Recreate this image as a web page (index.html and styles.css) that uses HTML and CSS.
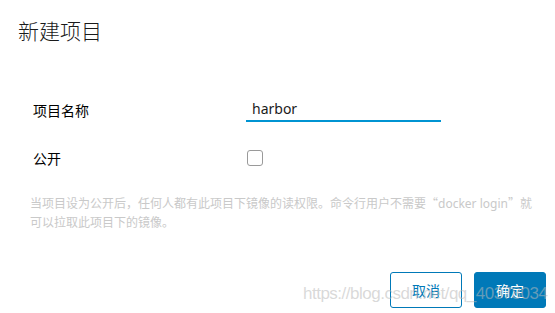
FILE: index.html
```html
<!DOCTYPE html>
<html lang="zh-CN">
<head>
<meta charset="utf-8">
<title>新建项目</title>
<link rel="stylesheet" href="styles.css">
</head>
<body>
<div class="dialog">
  <h1 class="title">新建项目</h1>
  <form class="form">
    <div class="row">
      <label class="label" for="name">项目名称</label>
      <div class="field"><input id="name" class="input" type="text" value="harbor"></div>
    </div>
    <div class="row row-public">
      <label class="label" for="pub">公开</label>
      <div class="field"><span class="checkbox" id="pub"></span></div>
    </div>
  </form>
  <p class="help">当项目设为公开后，任何人都有此项目下镜像的读权限。命令行用户不需要<span class="cjk">“</span>docker login<span class="cjk">”</span>就<br>可以拉取此项目下的镜像。</p>
  <div class="footer">
    <button class="btn btn-outline" type="button">取消</button>
    <button class="btn btn-primary" type="button">确定</button>
  </div>
</div>
<div class="watermark">https://blog.csdn.net/qq_40378034</div>
</body>
</html>
```
FILE: styles.css
```css
html, body {
  margin: 0;
  padding: 0;
  background: #ffffff;
}
body {
  position: relative;
  width: 555px;
  height: 313px;
  overflow: hidden;
  font-family: "Noto Sans", "Noto Sans CJK SC", sans-serif;
  color: #222;
}
.dialog {
  padding: 18px 9px 0 18px;
}
.title {
  margin: 0;
  font-family: "Noto Sans CJK SC", sans-serif;
  font-size: 21px;
  line-height: 25px;
  font-weight: 300;
  color: #1a1a1a;
}
.form {
  margin: 55px 0 0 0;
  padding-left: 15px;
}
.row {
  display: grid;
  grid-template-columns: 213px 195px;
  align-items: center;
  height: 24px;
}
.row-public {
  margin-top: 24px;
}
.label {
  font-family: "Noto Sans CJK SC", sans-serif;
  font-size: 14px;
  font-weight: 400;
  color: #000;
  line-height: 24px;
}
.field {
  display: flex;
  align-items: center;
  height: 24px;
}
.input {
  box-sizing: border-box;
  width: 195px;
  height: 24px;
  margin: 0;
  padding: 0 0 1px 6px;
  border: none;
  border-bottom: 2px solid #0094d2;
  outline: none;
  font-family: "Noto Sans", sans-serif;
  font-size: 14px;
  color: #1a1a1a;
  background: transparent;
}
.checkbox {
  box-sizing: border-box;
  display: block;
  width: 16px;
  height: 16px;
  margin-left: 1px;
  border: 1px solid #9a9a9a;
  border-radius: 3px;
  background: #fff;
}
.help {
  margin: 23px 0 0 12px;
  font-family: "Noto Sans", "Noto Sans CJK SC", sans-serif;
  font-size: 12px;
  line-height: 19px;
  color: #c9c9c9;
}
.cjk {
  font-family: "Noto Sans CJK SC", sans-serif;
}
.footer {
  display: flex;
  justify-content: flex-end;
  gap: 12px;
  margin-top: 40px;
}
.btn {
  box-sizing: border-box;
  width: 72px;
  height: 36px;
  margin: 0;
  padding: 0;
  border: 1px solid #0079b8;
  border-radius: 3px;
  font-family: "Noto Sans CJK SC", sans-serif;
  font-size: 14px;
  cursor: pointer;
}
.btn-outline {
  background: #fff;
  color: #0079b8;
}
.btn-primary {
  background: #0079b8;
  color: #fff;
}
.watermark {
  position: absolute;
  left: 303px;
  top: 284px;
  font-family: "Liberation Sans", sans-serif;
  font-size: 17px;
  letter-spacing: -0.5px;
  color: rgba(185, 185, 185, 0.55);
  white-space: nowrap;
  pointer-events: none;
}
```
